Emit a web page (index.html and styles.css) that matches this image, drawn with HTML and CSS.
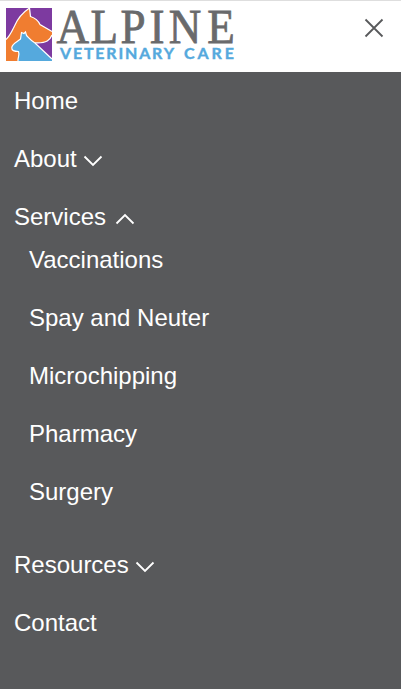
FILE: index.html
```html
<!DOCTYPE html>
<html lang="en">
<head>
<meta charset="utf-8">
<title>Alpine Veterinary Care</title>
<link rel="stylesheet" href="styles.css">
</head>
<body>
<header class="header">
  <svg class="logo" width="244" height="70" viewBox="0 0 244 70">
    <rect x="6" y="8" width="46" height="53" fill="#7d3aa0"/>
    <path d="M6 39.500C10 36 12 31 14.500 26C17 20 22 13 29.500 8L30.500 16.500C35 18 38 20 40 24.500L52 31.500V36C50 40 47 43.500 35 42.800L52 59.500V61H6Z" fill="#f07d30"/>
    <path d="M35 42.800L52 58.500V35C50 40 47 43.500 35 42.800Z" fill="#7d3aa0"/>
    <path class="outline" d="M6 39.500C10 36 12 31 14.500 26C17 20 22 13 29.500 8L30.500 16.500C35 18 38 20 40 24.500L52 31.500M52 35C50 40 47 43.500 35 42.800"/>
    <path d="M18 61C17.500 58 20 55 18.500 51.500C14 51.500 11.500 50.500 11.800 47.500C12 44 17 42 20.500 39L21.500 32.500L24 33.500L25.500 32L26.500 35.500C29 38 31 41 35 43L52 59V61Z" fill="#55a9dd"/>
    <path class="outline" d="M18 61C17.500 58 20 55 18.500 51.500C14 51.500 11.500 50.500 11.800 47.500C12 44 17 42 20.500 39L21.500 32.500L24 33.500L25.500 32L26.500 35.500C29 38 31 41 35 43L52 59"/>
    <g transform="translate(56.500 42.500) scale(.92 1)">
      <text class="logo-name" x="0 37 69.500 101 122 164" y="0">ALPINE</text>
    </g>
    <text class="logo-sub" x="60" y="59" textLength="114">VETERINARY</text>
    <text class="logo-sub" x="184" y="59" textLength="50">CARE</text>
  </svg>
  <svg class="close" width="20" height="20" viewBox="0 0 20 20"><path d="M1.500 1.500L18.500 18.500M18.500 1.500L1.500 18.500"/></svg>
</header>
<nav class="menu">
  <a class="item">Home</a>
  <a class="item">About<svg class="chevron" width="20" height="12" viewBox="0 0 20 12"><path d="M1.500 1.500L10 10L18.500 1.500"/></svg></a>
  <a class="item">Services<svg class="chevron open" width="20" height="12" viewBox="0 0 20 12"><path d="M1.500 10.500L10 2L18.500 10.500"/></svg></a>
  <div class="submenu">
    <a class="item">Vaccinations</a>
    <a class="item">Spay and Neuter</a>
    <a class="item">Microchipping</a>
    <a class="item">Pharmacy</a>
    <a class="item">Surgery</a>
  </div>
  <a class="item">Resources<svg class="chevron" width="20" height="12" viewBox="0 0 20 12"><path d="M1.500 1.500L10 10L18.500 1.500"/></svg></a>
  <a class="item">Contact</a>
</nav>
</body>
</html>
```
FILE: styles.css
```css
* { box-sizing: border-box; }
body {
  margin: 0;
  min-height: 100vh;
  display: flex;
  flex-direction: column;
  background: #58595b;
  font-family: "Liberation Sans", Arial, sans-serif;
}
.header {
  height: 72px;
  display: flex;
  justify-content: space-between;
  align-items: flex-start;
  background: #fff;
  border-top: 1px solid #dedede;
}
.logo { display: block; margin-top: -1px; overflow: visible; }
.outline { fill: none; stroke: #fff; stroke-width: 1.2; }
.logo-name {
  font-family: "Liberation Serif", serif;
  font-size: 49px;
  fill: #696a6c;
  stroke: #696a6c;
  stroke-width: 0.8px;
}
.logo-sub {
  font-family: Lato, sans-serif;
  font-size: 16px;
  font-weight: 700;
  fill: #55a9dd;
  stroke: #55a9dd;
  stroke-width: 0.4px;
}
.close { margin: 17px 17px 0 0; }
.close path, .chevron path { fill: none; stroke: #58595b; stroke-width: 1.8; }
.chevron path { stroke: #fff; }
.menu { padding-left: 14px; }
.item {
  height: 58px;
  display: flex;
  align-items: center;
  font-size: 24px;
  color: #fff;
}
.chevron { margin: 3px 0 0 6px; }
.chevron.open { margin-left: 9px; }
.submenu { margin: -15px 0 15px; padding-left: 15px; }
```
